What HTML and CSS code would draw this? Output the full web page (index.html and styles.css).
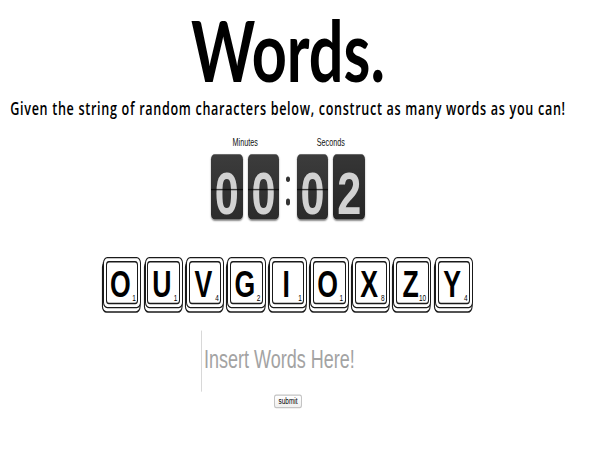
FILE: index.html
```html
<!DOCTYPE html>
<html>
<head>
<meta charset="utf-8">
<title>Words.</title>
<link rel="stylesheet" href="styles.css">
</head>
<body>
<div class="page">
  <h1 class="title">Words.</h1>
  <p class="intro">Given the string of random characters below, construct as many words as you can!</p>
  <div class="clock">
    <div class="group">
      <div class="label">Minutes</div>
      <div class="cards">
        <div class="card">0</div>
        <div class="card">0</div>
      </div>
    </div>
    <div class="colon"><span class="dot"></span><span class="dot"></span></div>
    <div class="group">
      <div class="label">Seconds</div>
      <div class="cards">
        <div class="card">0</div>
        <div class="card flipping">2</div>
      </div>
    </div>
  </div>
  <div class="tiles">
    <div class="tile">O<span class="pts">1</span></div>
    <div class="tile">U<span class="pts">1</span></div>
    <div class="tile">V<span class="pts">4</span></div>
    <div class="tile">G<span class="pts">2</span></div>
    <div class="tile">I<span class="pts">1</span></div>
    <div class="tile">O<span class="pts">1</span></div>
    <div class="tile">X<span class="pts">8</span></div>
    <div class="tile">Z<span class="pts">10</span></div>
    <div class="tile">Y<span class="pts">4</span></div>
  </div>
  <form class="entry">
    <input class="words" type="text" placeholder="Insert Words Here!">
    <button class="submit" type="button">submit</button>
  </form>
</div>
</body>
</html>
```
FILE: styles.css
```css
html, body {
  margin: 0;
  padding: 0;
  background: #fff;
}

body {
  min-height: 450px;
}

/* The layout is drawn narrow: every size uses a 0.72px unit,
   and the page is then stretched back vertically. */
.page {
  --u: 0.72px;
  width: calc(800 * var(--u));
  height: calc(450 * var(--u));
  transform: scaleY(1.38889);
  transform-origin: 0 0;
  display: flex;
  flex-direction: column;
  align-items: center;
  font-family: "Liberation Sans", Arial, sans-serif;
  color: #000;
}

.title {
  margin: calc(7.5 * var(--u)) 0 0;
  font-family: Lato, "Liberation Sans", sans-serif;
  font-weight: 700;
  font-size: calc(85 * var(--u));
  line-height: calc(85 * var(--u));
  height: calc(85 * var(--u));
}

.intro {
  margin: calc(9.5 * var(--u)) 0 0;
  font-family: "Open Sans", Lato, sans-serif;
  font-weight: 600;
  font-size: calc(17.5 * var(--u));
  line-height: calc(18 * var(--u));
  height: calc(18 * var(--u));
  letter-spacing: calc(0.95 * var(--u));
  white-space: nowrap;
}

.clock {
  margin-top: calc(18 * var(--u));
  display: flex;
  align-items: flex-end;
}

.group {
  display: flex;
  flex-direction: column;
  align-items: center;
  gap: calc(5 * var(--u));
}

.label {
  font-size: calc(10 * var(--u));
  line-height: calc(11 * var(--u));
  height: calc(11 * var(--u));
  color: #111;
}

.cards {
  display: flex;
  gap: calc(7 * var(--u));
}

.card {
  position: relative;
  width: calc(44 * var(--u));
  height: calc(66 * var(--u));
  box-sizing: border-box;
  padding-top: calc(13 * var(--u));
  border-radius: calc(5 * var(--u));
  background: linear-gradient(#3c3c3c, #2b2b2b);
  box-shadow: 0 calc(1 * var(--u)) calc(2 * var(--u)) rgba(0, 0, 0, 0.45);
  color: #d2d2d2;
  font-weight: bold;
  font-size: calc(60 * var(--u));
  line-height: calc(53 * var(--u));
  text-align: center;
}

.card::after {
  content: "";
  position: absolute;
  left: 0;
  right: 0;
  top: calc(35 * var(--u));
  height: 1px;
  background: rgba(0, 0, 0, 0.7);
}

.card.flipping {
  background: linear-gradient(#363636, #262626);
}

.card.flipping::after {
  display: none;
}

.colon {
  width: calc(24 * var(--u));
  height: calc(66 * var(--u));
  display: flex;
  flex-direction: column;
  align-items: center;
  justify-content: center;
  gap: calc(17 * var(--u));
  padding-top: calc(7 * var(--u));
  box-sizing: border-box;
}

.dot {
  width: calc(6 * var(--u));
  height: calc(6 * var(--u));
  border-radius: 50%;
  background: #333;
}

.tiles {
  margin-top: calc(37 * var(--u));
  display: flex;
  gap: calc(4.6 * var(--u));
}

.tile {
  position: relative;
  width: calc(53 * var(--u));
  height: calc(51 * var(--u));
  box-sizing: border-box;
  border: 1px solid #1a1a1a;
  border-radius: calc(6 * var(--u));
  background: #fff;
  box-shadow: calc(-1 * var(--u)) calc(4 * var(--u)) 0 calc(-1 * var(--u)) #fff,
              calc(-1 * var(--u)) calc(4 * var(--u)) 0 calc(0.5 * var(--u)) #1a1a1a;
  padding: calc(9 * var(--u)) calc(5 * var(--u)) 0 0;
  text-align: center;
  font-weight: bold;
  font-size: calc(37 * var(--u));
  line-height: calc(37 * var(--u));
}

.tile::before {
  content: "";
  position: absolute;
  inset: calc(2.5 * var(--u));
  border: 1px solid #1a1a1a;
  border-radius: calc(4 * var(--u));
}

.pts {
  position: absolute;
  right: calc(6 * var(--u));
  bottom: calc(3 * var(--u));
  font-size: calc(9 * var(--u));
  line-height: calc(9 * var(--u));
  font-weight: normal;
}

.entry {
  margin: calc(22 * var(--u)) 0 0;
  display: flex;
  flex-direction: column;
  align-items: center;
}

.words {
  width: calc(242 * var(--u));
  height: calc(62 * var(--u));
  box-sizing: border-box;
  margin: 0;
  padding: 0 0 0 calc(3 * var(--u));
  border: none;
  border-left: 1px solid #d8d8d8;
  outline: none;
  font-family: "Liberation Sans", Arial, sans-serif;
  font-size: calc(25 * var(--u));
  color: #333;
  background: transparent;
}

.words::placeholder {
  color: #a3a3a3;
}

.submit {
  margin-top: calc(3 * var(--u));
  height: calc(13 * var(--u));
  padding: 0 calc(5 * var(--u));
  border: 1px solid #c4c4c4;
  border-radius: calc(3 * var(--u));
  background: linear-gradient(#fff, #f0f0f0);
  font-family: "Liberation Sans", Arial, sans-serif;
  font-size: calc(9 * var(--u));
  line-height: calc(11 * var(--u));
  color: #000;
}
```
